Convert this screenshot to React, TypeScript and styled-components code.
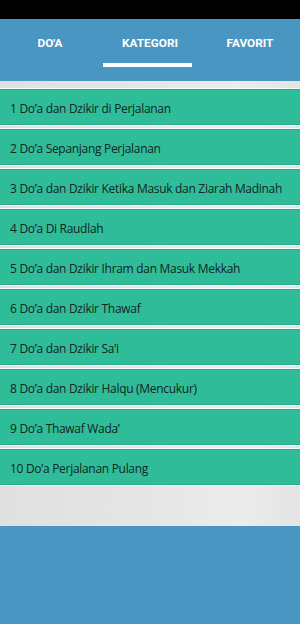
import React from 'react';
import styled, { createGlobalStyle } from 'styled-components';

const GlobalStyle = createGlobalStyle`
  html, body {
    margin: 0;
    padding: 0;
    background: #4a96c2;
  }
  * { box-sizing: border-box; }
`;

const Screen = styled.div`
  width: 300px;
  height: 624px;
  display: flex;
  flex-direction: column;
  background: #4a96c2;
  overflow: hidden;
`;

const StatusBar = styled.div`
  height: 19px;
  background: #000;
`;

const Header = styled.div`
  height: 62px;
  background: #4a96c2;
  display: grid;
  grid-template-columns: repeat(3, 1fr);
`;

const Tab = styled.div<{ $active?: boolean }>`
  position: relative;
  display: flex;
  justify-content: center;
  padding-top: 17px;
  font-family: Roboto, "Liberation Sans", sans-serif;
  font-weight: 700;
  font-size: 11.8px;
  color: #fff;

  &::after {
    content: '';
    display: ${(p) => (p.$active ? 'block' : 'none')};
    position: absolute;
    left: 3px;
    right: 8px;
    top: 44px;
    height: 4px;
    background: #fff;
  }
`;

const Content = styled.div`
  height: 445px;
  background: linear-gradient(90deg, #e0e0e0 0%, #e6e6e6 50%, #ececec 80%, #e4e4e4 100%);
  padding-top: 8px;
  display: flex;
  flex-direction: column;
  gap: 4px;
`;

const Row = styled.div`
  height: 36px;
  background: #2ebd98;
  border-top: 1px solid #29ad8b;
  border-bottom: 1px solid #29ad8b;
  box-shadow: 0 1px 0 #f4faf8, 0 -1px 0 #f4faf8;
  display: flex;
  align-items: center;
  padding: 3px 0 0 10px;
  font-family: "Open Sans", "Liberation Sans", sans-serif;
  font-size: 12px;
  letter-spacing: -0.3px;
  color: #14241f;
  white-space: nowrap;
`;

const items = [
  'Do’a dan Dzikir di Perjalanan',
  'Do’a Sepanjang Perjalanan',
  'Do’a dan Dzikir Ketika Masuk dan Ziarah Madinah',
  'Do’a Di Raudlah',
  'Do’a dan Dzikir Ihram dan Masuk Mekkah',
  'Do’a dan Dzikir Thawaf',
  'Do’a dan Dzikir Sa’i',
  'Do’a dan Dzikir Halqu (Mencukur)',
  'Do’a Thawaf Wada’',
  'Do’a Perjalanan Pulang',
];

export default function App() {
  return (
    <>
      <GlobalStyle />
      <Screen>
        <StatusBar />
        <Header>
          <Tab>DO'A</Tab>
          <Tab $active>KATEGORI</Tab>
          <Tab>FAVORIT</Tab>
        </Header>
        <Content>
          {items.map((t, i) => (
            <Row key={i}>
              {i + 1} {t}
            </Row>
          ))}
        </Content>
      </Screen>
    </>
  );
}
